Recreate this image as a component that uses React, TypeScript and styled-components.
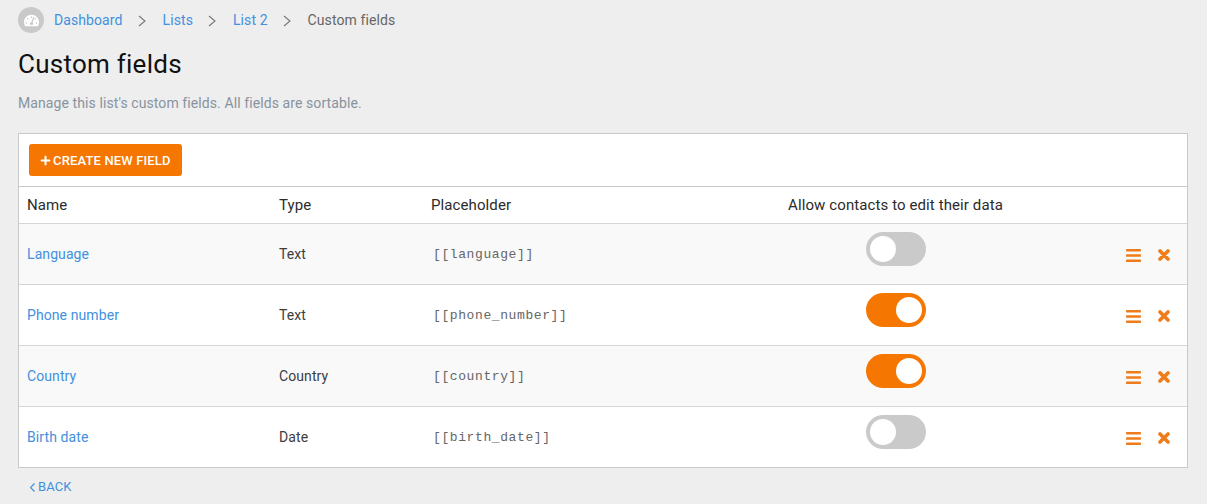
import styled, { createGlobalStyle } from 'styled-components';
import { FaBars, FaPlus, FaTachometerAlt } from 'react-icons/fa';

const orange = '#f57600';
const blue = '#4290de';

const GlobalStyle = createGlobalStyle`
  html, body {
    margin: 0;
    padding: 0;
    background: #eeeeee;
    font-family: Roboto, "Liberation Sans", sans-serif;
    letter-spacing: 0.09px;
    color: #3d3d3d;
  }
  a {
    color: ${blue};
    text-decoration: none;
  }
`

const Page = styled.div`
  padding: 7px 19px 0 18px;
`

const Breadcrumb = styled.nav`
  display: flex;
  align-items: center;
  height: 26px;
  font-size: 14px;
`

const HomeIcon = styled.a`
  display: flex;
  align-items: center;
  justify-content: center;
  width: 26px;
  height: 26px;
  border-radius: 50%;
  background: #c9c9c9;
  color: #fff;
  font-size: 15px;
  margin-right: 10px;
`

const Chevron = styled.svg`
  width: 8px;
  height: 12px;
  margin: 1px 17px 0 15px;
  fill: none;
  stroke: #777;
  stroke-width: 1.1;
`

const Current = styled.span`
  color: #666;
`

const Title = styled.h1`
  margin: 16px 0 0;
  font-size: 26px;
  letter-spacing: 0.25px;
  line-height: 30px;
  font-weight: 400;
  color: #111;
`

const Subtitle = styled.p`
  margin: 14px 0 0;
  font-size: 14px;
  line-height: 20px;
  color: #87939f;
`

const Panel = styled.section`
  margin-top: 20px;
  background: #fff;
  border: 1px solid #c9c9c9;
`

const Toolbar = styled.div`
  display: flex;
  align-items: center;
  height: 53px;
  padding: 0 10px;
  box-sizing: border-box;
  border-bottom: 1px solid #c9c9c9;
`

const CreateButton = styled.button`
  display: flex;
  align-items: center;
  gap: 2px;
  height: 32px;
  padding: 0 11px;
  border: 0;
  border-radius: 3px;
  background: ${orange};
  color: #fff;
  font-family: inherit;
  font-size: 13px;
  letter-spacing: 0.15px;
  font-weight: 500;
  white-space: nowrap;
  svg {
    font-size: 11px;
  }
`

const Table = styled.table`
  width: 100%;
  border-collapse: collapse;
  table-layout: fixed;
  font-size: 14px;
`

const HeadCell = styled.th<{ $center?: boolean }>`
  height: 36px;
  padding: 1px 8px 0;
  box-sizing: border-box;
  font-size: 15px;
  letter-spacing: 0.1px;
  font-weight: 400;
  color: #2b2b2b;
  text-align: ${p => (p.$center ? 'center' : 'left')};
`

const Row = styled.tr<{ $striped: boolean }>`
  height: 61px;
  border-top: 1px solid #d6d6d6;
  background: ${p => (p.$striped ? '#f9f9f9' : '#fff')};
`

const Cell = styled.td`
  padding: 1px 8px 0;
`

const Mono = styled.td`
  padding: 1px 8px 0 10px;
  font-family: "Liberation Mono", "Courier New", monospace;
  font-size: 13px;
  letter-spacing: 0.6px;
  color: #666;
`

const ToggleCell = styled.td`
  padding: 0;
  vertical-align: top;
`

const Toggle = styled.span<{ $on: boolean }>`
  display: flex;
  justify-content: ${p => (p.$on ? 'flex-end' : 'flex-start')};
  width: 60px;
  height: 34px;
  margin: 8px auto 0;
  padding: 4px;
  box-sizing: border-box;
  border-radius: 17px;
  background: ${p => (p.$on ? orange : '#cacaca')};
  &::before {
    content: '';
    width: 26px;
    height: 26px;
    border-radius: 50%;
    background: #fff;
  }
`

const Actions = styled.td`
  padding: 3px 17px 0 0;
`

const ActionIcons = styled.div`
  display: flex;
  justify-content: flex-end;
  align-items: center;
  gap: 16px;
  color: #ee7c1a;
  font-size: 17px;
`

const RemoveIcon = styled.svg`
  width: 12px;
  height: 12px;
  stroke: currentColor;
  stroke-width: 3.6;
  stroke-linecap: round;
`

const BackLink = styled.a`
  display: inline-flex;
  align-items: center;
  gap: 3px;
  margin: 11px 0 0 12px;
  font-size: 13px;
  line-height: 16px;
`

const BackChevron = styled.svg`
  width: 5px;
  height: 9px;
  fill: none;
  stroke: currentColor;
  stroke-width: 1.2;
`

const fields = [
  { name: 'Language', type: 'Text', placeholder: '[[language]]', editable: false },
  { name: 'Phone number', type: 'Text', placeholder: '[[phone_number]]', editable: true },
  { name: 'Country', type: 'Country', placeholder: '[[country]]', editable: true },
  { name: 'Birth date', type: 'Date', placeholder: '[[birth_date]]', editable: false },
];

const Separator = () => (
  <Chevron viewBox="0 0 8 12">
    <path d="M1 1l6 5-6 5" />
  </Chevron>
);

export default function App() {
  return (
    <Page>
      <GlobalStyle />
      <Breadcrumb>
        <HomeIcon href="#"><FaTachometerAlt /></HomeIcon>
        <a href="#">Dashboard</a>
        <Separator />
        <a href="#">Lists</a>
        <Separator />
        <a href="#">List 2</a>
        <Separator />
        <Current>Custom fields</Current>
      </Breadcrumb>
      <Title>Custom fields</Title>
      <Subtitle>Manage this list's custom fields. All fields are sortable.</Subtitle>
      <Panel>
        <Toolbar>
          <CreateButton><FaPlus /> CREATE NEW FIELD</CreateButton>
        </Toolbar>
        <Table>
          <colgroup>
            <col width="252" />
            <col width="152" />
            <col width="342" />
            <col width="261" />
            <col />
          </colgroup>
          <thead>
            <tr>
              <HeadCell>Name</HeadCell>
              <HeadCell>Type</HeadCell>
              <HeadCell>Placeholder</HeadCell>
              <HeadCell $center>Allow contacts to edit their data</HeadCell>
              <HeadCell />
            </tr>
          </thead>
          <tbody>
            {fields.map((field, index) => (
              <Row key={field.name} $striped={index % 2 === 0}>
                <Cell><a href="#">{field.name}</a></Cell>
                <Cell>{field.type}</Cell>
                <Mono>{field.placeholder}</Mono>
                <ToggleCell><Toggle $on={field.editable} /></ToggleCell>
                <Actions>
                  <ActionIcons>
                    <FaBars />
                    <RemoveIcon viewBox="0 0 12 12">
                      <path d="M2 2l8 8M10 2l-8 8" />
                    </RemoveIcon>
                  </ActionIcons>
                </Actions>
              </Row>
            ))}
          </tbody>
        </Table>
      </Panel>
      <BackLink href="#">
        <BackChevron viewBox="0 0 5 9"><path d="M4.5 .5l-4 4 4 4" /></BackChevron>
        BACK
      </BackLink>
    </Page>
  );
}
